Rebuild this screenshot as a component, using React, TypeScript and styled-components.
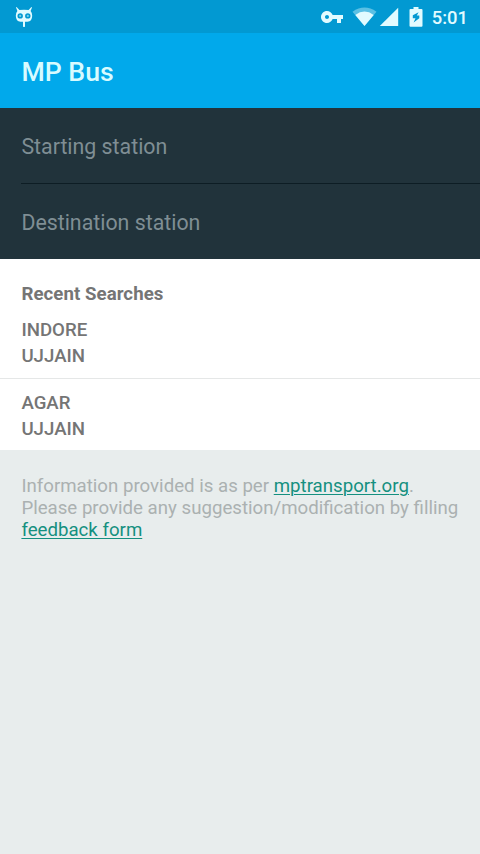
import React from "react";
import styled, { createGlobalStyle } from "styled-components";

const GlobalStyle = createGlobalStyle`
  * { box-sizing: border-box; }
  body { margin: 0; background: #e8eded; font-family: Roboto, "Noto Sans", sans-serif; }
`;

const Screen = styled.main`
  display: flex;
  flex-direction: column;
  min-height: 854px;
  background: #e8eded;
`;

const StatusBar = styled.div`
  display: flex;
  align-items: center;
  justify-content: space-between;
  height: 33px;
  padding: 0 12px 0 14px;
  background: #0299d2;
  color: #e2fbff;
`;

const StatusIcons = styled.div`
  display: flex;
  align-items: center;
`;

const Icon = styled.svg<{ $gap?: number }>`
  display: block;
  flex: none;
  margin-right: ${(p) => p.$gap ?? 0}px;
  fill: currentColor;
`;

const Clock = styled.span`
  font-size: 18.4px;
  font-weight: 500;
  line-height: 32px;
  padding-top: 2px;
`;

const Toolbar = styled.header`
  display: flex;
  align-items: center;
  height: 75px;
  padding: 2px 21.4px 0;
  background: #01a9eb;
`;

const Title = styled.h1`
  margin: 0;
  color: #d8fbff;
  font-size: 26.67px;
  font-weight: 500;
`;

const SearchPanel = styled.section`
  height: 151px;
  padding-left: 21.4px;
  background: #21333b;
`;

const StationField = styled.div<{ $divided?: boolean }>`
  display: flex;
  align-items: center;
  height: ${(p) => (p.$divided ? 76 : 75)}px;
  border-bottom: ${(p) => (p.$divided ? "1px solid #0d1d24" : "none")};
  padding-top: 1px;
  color: #7f8e94;
  font-size: 21.33px;
`;

const Recent = styled.section`
  height: 191.4px;
  background: #fff;
  color: #757575;
  font-size: 18.67px;
`;

const Heading = styled.h2`
  margin: 0;
  padding: 24px 21.4px 0;
  font-size: 18.67px;
  font-weight: 700;
  letter-spacing: 0.05px;
  line-height: 22px;
`;

const Trip = styled.div<{ $divided?: boolean }>`
  padding: ${(p) => (p.$divided ? "13px 21.4px 9px" : "12px 21.4px 0")};
  border-bottom: ${(p) => (p.$divided ? "1px solid #e5e7e7" : "none")};
  font-weight: 500;
  line-height: 25.5px;
`;

const Note = styled.p`
  margin: 0;
  padding: 24.6px 16px 0 21.4px;
  color: #abb1b1;
  font-size: 18.67px;
  line-height: 22px;
`;

const Link = styled.a`
  color: #159080;
  text-decoration: underline;
  text-decoration-thickness: 1px;
  text-underline-offset: 2px;
`;

export default function App() {
  return (
    <Screen>
      <GlobalStyle />
      <StatusBar>
        <Icon width="20" height="22" viewBox="0 0 20 22">
          <path
            fillRule="evenodd"
            d="M2.6 1L5.4 4.1Q10 3.2 14.6 4.1L17.4 1L18 1.5L16.6 4.9Q18.2 6.6 18.2 9.8Q18 15.6 13.5 15.8H6.5Q2 15.6 1.8 9.8Q1.8 6.6 3.4 4.9L2 1.5ZM6.2 7.2A2.7 2.7 0 1 0 6.2 12.6A2.7 2.7 0 1 0 6.2 7.2ZM13.8 7.2A2.7 2.7 0 1 0 13.8 12.6A2.7 2.7 0 1 0 13.8 7.2ZM9 15.8H11V20.6Q10 21.6 9 20.6Z"
          />
          <circle cx="6.2" cy="9.9" r="1.1" opacity="0.55" />
          <circle cx="13.8" cy="9.9" r="1.1" opacity="0.55" />
        </Icon>
        <StatusIcons>
          <Icon $gap={9} width="22" height="12" viewBox="1 6 22 12" preserveAspectRatio="none">
            <path d="M12.65 10C11.83 7.67 9.61 6 7 6c-3.31 0-6 2.69-6 6s2.69 6 6 6c2.61 0 4.83-1.67 5.65-4H17v4h4v-4h2v-4H12.65zM7 14c-1.1 0-2-.9-2-2s.9-2 2-2 2 .9 2 2-.9 2-2 2z" />
          </Icon>
          <Icon $gap={2} width="25" height="20" viewBox="0 0 25 20">
            <path opacity="0.4" d="M.5 4.7Q12.5-3.5 24.5 4.7L12.5 19Z" />
            <path d="M3.3 8Q12.5 1.2 21.7 8L12.5 19Z" />
          </Icon>
          <Icon $gap={10} width="20" height="20" viewBox="0 0 20 20">
            <path d="M19.2.7V19H.8Z" />
          </Icon>
          <Icon $gap={9} width="14" height="20" viewBox="0 0 14 20">
            <path
              fillRule="evenodd"
              d="M4.5 0H9.5V2H12.5Q13.5 2 13.5 3V18.7Q13.5 19.7 12.5 19.7H1.5Q.5 19.7.5 18.7V3Q.5 2 1.5 2H4.5ZM9.6 5.2L3.8 8.2V11.3H6.5L4.6 15.6L10.3 11.3V8.6H7.8Z"
            />
          </Icon>
          <Clock>5:01</Clock>
        </StatusIcons>
      </StatusBar>
      <Toolbar>
        <Title>MP Bus</Title>
      </Toolbar>
      <SearchPanel>
        <StationField $divided>Starting station</StationField>
        <StationField>Destination station</StationField>
      </SearchPanel>
      <Recent>
        <Heading>Recent Searches</Heading>
        <Trip $divided>
          <div>INDORE</div>
          <div>UJJAIN</div>
        </Trip>
        <Trip>
          <div>AGAR</div>
          <div>UJJAIN</div>
        </Trip>
      </Recent>
      <Note>
        Information provided is as per <Link>mptransport.org</Link>.<br />
        Please provide any suggestion/modification by filling{" "}
        <Link>feedback form</Link>
      </Note>
    </Screen>
  );
}
